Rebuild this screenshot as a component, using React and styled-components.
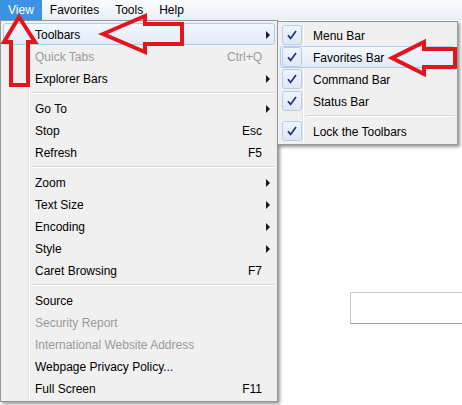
import React from 'react';
import styled, { createGlobalStyle, css } from 'styled-components';

const GlobalStyle = createGlobalStyle`
  body {
    margin: 0;
    background: #ffffff;
    font-family: "Liberation Sans", Arial, sans-serif;
    font-size: 12px;
  }
`;

const Screen = styled.div`
  position: relative;
  width: 462px;
  height: 405px;
  overflow: hidden;
  background: #ffffff;
`;

const MenuBar = styled.div`
  display: flex;
  height: 20px;
  background: linear-gradient(#fbfcfe, #e9eff7);
`;

const MenuTitle = styled.div`
  padding: 1px 8px 0;
  line-height: 19px;
  color: #000;
  ${(p) =>
    p.$active &&
    css`
      background: #3b93e5;
      color: #ffffff;
    `}
`;

const Page = styled.div`
  padding: 272px 0 0 350px;
`;

const PageInput = styled.div`
  width: 130px;
  height: 30px;
  border: 1px solid #cacaca;
  border-bottom-color: #9c9c9c;
  background: #fff;
`;

const Menu = styled.div`
  position: absolute;
  box-sizing: border-box;
  top: ${(p) => p.$top}px;
  left: ${(p) => p.$left}px;
  width: ${(p) => p.$width}px;
  padding: 2px;
  background-color: #f0f0f0;
  background-image: linear-gradient(
    to right,
    transparent ${(p) => p.$gutter}px,
    #e2e3e3 ${(p) => p.$gutter}px,
    #e2e3e3 ${(p) => p.$gutter + 1}px,
    #ffffff ${(p) => p.$gutter + 1}px,
    #ffffff ${(p) => p.$gutter + 2}px,
    transparent ${(p) => p.$gutter + 2}px
  );
  border: 1px solid #979797;
  box-shadow: 2px 2px 3px rgba(0, 0, 0, 0.4);
`;

const Item = styled.div`
  display: flex;
  align-items: center;
  height: 22px;
  box-sizing: border-box;
  padding-left: ${(p) => p.$indent}px;
  padding-top: 1px;
  border: 1px solid transparent;
  border-radius: 3px;
  color: ${(p) => (p.$disabled ? '#9a9a9a' : '#000')};
  ${(p) =>
    p.$hover &&
    css`
      border-color: #aecbf0;
      background: linear-gradient(#f3f7fd, #e1ebf8);
    `}
`;

const Label = styled.span`
  flex: 1;
  white-space: nowrap;
`;

const Shortcut = styled.span`
  white-space: nowrap;
`;

const ArrowSlot = styled.span`
  width: 12px;
  padding-left: 4px;
  box-sizing: border-box;
  display: flex;
  align-items: center;
`;

const SubArrow = styled.span`
  width: 0;
  height: 0;
  border-top: 4px solid transparent;
  border-bottom: 4px solid transparent;
  border-left: 4px solid #1a1a1a;
`;

const Separator = styled.div`
  height: 8px;
  margin-left: ${(p) => p.$indent}px;
  display: flex;
  flex-direction: column;
  justify-content: center;

  &::before {
    content: '';
    height: 1px;
    background: #d7d7d7;
  }
  &::after {
    content: '';
    height: 1px;
    background: #ffffff;
  }
`;

const CheckBox = styled.span`
  width: 20px;
  height: 20px;
  box-sizing: border-box;
  margin: -1px 11px 0 1px;
  border: 1px solid #b5cdec;
  border-radius: 3px;
  background: linear-gradient(#eef4fc, #dde8f7);
  display: flex;
  align-items: center;
  justify-content: center;
`;

const Overlay = styled.svg`
  position: absolute;
  left: 0;
  top: 0;
  pointer-events: none;
`;

const viewItems = [
  { label: 'Toolbars', sub: true, hover: true },
  { label: 'Quick Tabs', key: 'Ctrl+Q', disabled: true },
  { label: 'Explorer Bars', sub: true },
  { sep: true },
  { label: 'Go To', sub: true },
  { label: 'Stop', key: 'Esc' },
  { label: 'Refresh', key: 'F5' },
  { sep: true },
  { label: 'Zoom', sub: true },
  { label: 'Text Size', sub: true },
  { label: 'Encoding', sub: true },
  { label: 'Style', sub: true },
  { label: 'Caret Browsing', key: 'F7' },
  { sep: true },
  { label: 'Source' },
  { label: 'Security Report', disabled: true },
  { label: 'International Website Address', disabled: true },
  { label: 'Webpage Privacy Policy...' },
  { label: 'Full Screen', key: 'F11' },
];

const toolbarItems = [
  { label: 'Menu Bar' },
  { label: 'Favorites Bar', hover: true },
  { label: 'Command Bar' },
  { label: 'Status Bar' },
  { sep: true },
  { label: 'Lock the Toolbars' },
];

const Check = () => (
  <svg width="12" height="12" viewBox="0 0 12 12">
    <path d="M2 6.2 L4.6 9.4 L10 2" fill="none" stroke="#1f2a8c" strokeWidth="1.7" />
  </svg>
);

const App = () => (
  <Screen>
    <GlobalStyle />
    <MenuBar>
      <MenuTitle $active>View</MenuTitle>
      <MenuTitle>Favorites</MenuTitle>
      <MenuTitle>Tools</MenuTitle>
      <MenuTitle>Help</MenuTitle>
    </MenuBar>
    <Page>
      <PageInput />
    </Page>

    <Menu $top={20} $left={0} $width={278} $gutter={27}>
      {viewItems.map((it, i) =>
        it.sep ? (
          <Separator key={i} $indent={29} />
        ) : (
          <Item key={i} $indent={31} $hover={it.hover} $disabled={it.disabled}>
            <Label>{it.label}</Label>
            {it.key && <Shortcut>{it.key}</Shortcut>}
            <ArrowSlot>{it.sub && <SubArrow />}</ArrowSlot>
          </Item>
        )
      )}
    </Menu>

    <Menu $top={21} $left={277} $width={181} $gutter={24}>
      {toolbarItems.map((it, i) =>
        it.sep ? (
          <Separator key={i} $indent={26} />
        ) : (
          <Item key={i} $indent={0} $hover={it.hover}>
            <CheckBox>
              <Check />
            </CheckBox>
            <Label>{it.label}</Label>
          </Item>
        )
      )}
    </Menu>

    <Overlay width="462" height="405" viewBox="0 0 462 405">
      <g fill="none" stroke="#e3141c" strokeWidth="4" strokeLinejoin="miter">
        <polygon points="19,17 35,42 28,42 28,85 11,85 11,42 4,42" />
        <polygon points="103,34 145,16 145,24 182,24 182,44 145,44 145,52" />
        <polygon points="392,58 424,42 424,49 455,49 455,67 424,67 424,74" />
      </g>
    </Overlay>
  </Screen>
);

export default App;
